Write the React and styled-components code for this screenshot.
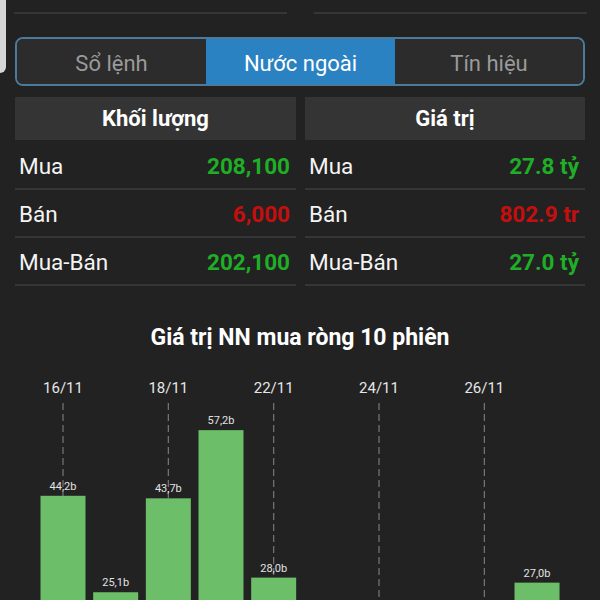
import React from "react";
import styled, { createGlobalStyle } from "styled-components";

const Global = createGlobalStyle`
  html, body { margin: 0; padding: 0; background: #222222; overflow: hidden; }
  body { font-family: Roboto, "Noto Sans", "Liberation Sans", sans-serif; color: #f2f2f2; }
  * { box-sizing: border-box; }
`;

const Page = styled.div`
  position: relative;
  width: 600px;
  height: 600px;
  overflow: hidden;
  background: #222222;
`;

const EdgeHandle = styled.div`
  position: absolute;
  left: 0;
  top: 0;
  width: 6px;
  height: 73px;
  background: #d6d6d6;
  border-bottom-right-radius: 6px;
`;

const TopRow = styled.div`
  display: grid;
  grid-template-columns: 1fr 1fr;
  gap: 27px;
  padding: 0 13px 0 14px;
`;

const TopCell = styled.div`
  height: 14px;
  overflow: hidden;
  display: flex;
  align-items: flex-end;
  justify-content: ${(p) => (p.$right ? "flex-end" : "flex-start")};
  padding: ${(p) => (p.$right ? "0 36px 0 0" : "0 0 0 6px")};
  border-bottom: 2px solid #363636;
`;

const TopText = styled.span`
  display: block;
  font-size: 21px;
  line-height: 20px;
  margin-bottom: 13px;
  font-weight: ${(p) => (p.$bold ? 700 : 400)};
  color: #f2f2f2;
`;

const Tabs = styled.div`
  margin: 23px 15px 0;
  height: 49px;
  border: 2px solid #4b7a9c;
  border-radius: 8px;
  overflow: hidden;
  display: grid;
  grid-template-columns: 189px 189px 1fr;
  background: #2c2c2c;
`;

const Tab = styled.div`
  display: flex;
  align-items: center;
  justify-content: center;
  padding-top: 3px;
  font-size: 22px;
  color: ${(p) => (p.$active ? "#ffffff" : "#9a9a9a")};
  background: ${(p) => (p.$active ? "#2a82c3" : "#2c2c2c")};
`;

const Tables = styled.div`
  margin: 11px 15px 0;
  display: grid;
  grid-template-columns: 281px 280px;
  gap: 9px;
`;

const Table = styled.div`
  display: flex;
  flex-direction: column;
`;

const Header = styled.div`
  height: 43px;
  margin-bottom: 2px;
  background: #343434;
  display: flex;
  align-items: center;
  justify-content: center;
  font-size: 22px;
  font-weight: 700;
  color: #ffffff;
`;

const Row = styled.div`
  height: 48px;
  display: flex;
  align-items: center;
  justify-content: space-between;
  padding: 2px 6px 0 4px;
  border-bottom: 2px solid #363636;
`;

const Label = styled.span`
  font-size: 22.5px;
  color: #f4f4f4;
`;

const Value = styled.span`
  font-size: 22.5px;
  font-weight: 700;
  color: ${(p) => (p.$tone === "down" ? "#c50f0f" : "#1fae26")};
`;

const Title = styled.div`
  margin-top: 40px;
  height: 24px;
  line-height: 24px;
  text-align: center;
  font-size: 23px;
  font-weight: 700;
  color: #ffffff;
`;

const Chart = styled.svg`
  display: block;
  margin-top: 10px;
`;

const volume = [
  { label: "Mua", value: "208,100", tone: "up" },
  { label: "Bán", value: "6,000", tone: "down" },
  { label: "Mua-Bán", value: "202,100", tone: "up" },
];

const worth = [
  { label: "Mua", value: "27.8 tỷ", tone: "up" },
  { label: "Bán", value: "802.9 tr", tone: "down" },
  { label: "Mua-Bán", value: "27.0 tỷ", tone: "up" },
];

const bars = [
  { v: 44.2, date: "16/11" },
  { v: 25.1 },
  { v: 43.7, date: "18/11" },
  { v: 57.2 },
  { v: 28.0, date: "22/11" },
  { v: 12.4 },
  { v: 8.6, date: "24/11" },
  { v: 15.3 },
  { v: 6.1, date: "26/11" },
  { v: 27.0 },
];

const BASE = 359;
const SCALE = 5.05;
const fmt = (v) => v.toFixed(1).replace(".", ",") + "b";

function NetChart() {
  return (
    <Chart width="600" height="400" viewBox="0 0 600 400">
      {bars.map((b, i) => {
        const cx = 63 + 52.67 * i;
        return b.date ? (
          <g key={"d" + i}>
            <text
              x={cx}
              y={33}
              textAnchor="middle"
              fontSize="15"
              fill="#e6e6e6"
              fontFamily="Roboto, sans-serif"
            >
              {b.date}
            </text>
            <line
              x1={cx}
              x2={cx}
              y1={43}
              y2={BASE}
              stroke="#777777"
              strokeWidth="1.2"
              strokeDasharray="7 4"
            />
          </g>
        ) : null;
      })}
      {bars.map((b, i) => {
        const cx = 63 + 52.67 * i;
        const h = b.v * SCALE;
        const top = BASE - h;
        return (
          <g key={"b" + i}>
            <rect x={cx - 22.5} y={top} width="45" height={h} fill="#6cbf68" />
            <text
              x={cx}
              y={top - 6}
              textAnchor="middle"
              fontSize="11"
              fill="#e2e2e2"
              fontFamily="Roboto, sans-serif"
            >
              {fmt(b.v)}
            </text>
          </g>
        );
      })}
    </Chart>
  );
}

export default function App() {
  return (
    <Page>
      <Global />
      <TopRow>
        <TopCell>
          <TopText>Tỷ lệ</TopText>
        </TopCell>
        <TopCell $right>
          <TopText $bold>tỷ</TopText>
        </TopCell>
      </TopRow>
      <Tabs>
        <Tab>Sổ lệnh</Tab>
        <Tab $active>Nước ngoài</Tab>
        <Tab>Tín hiệu</Tab>
      </Tabs>
      <Tables>
        <Table>
          <Header>Khối lượng</Header>
          {volume.map((r) => (
            <Row key={r.label}>
              <Label>{r.label}</Label>
              <Value $tone={r.tone}>{r.value}</Value>
            </Row>
          ))}
        </Table>
        <Table>
          <Header>Giá trị</Header>
          {worth.map((r) => (
            <Row key={r.label}>
              <Label>{r.label}</Label>
              <Value $tone={r.tone}>{r.value}</Value>
            </Row>
          ))}
        </Table>
      </Tables>
      <Title>Giá trị NN mua ròng 10 phiên</Title>
      <NetChart />
      <EdgeHandle />
    </Page>
  );
}
